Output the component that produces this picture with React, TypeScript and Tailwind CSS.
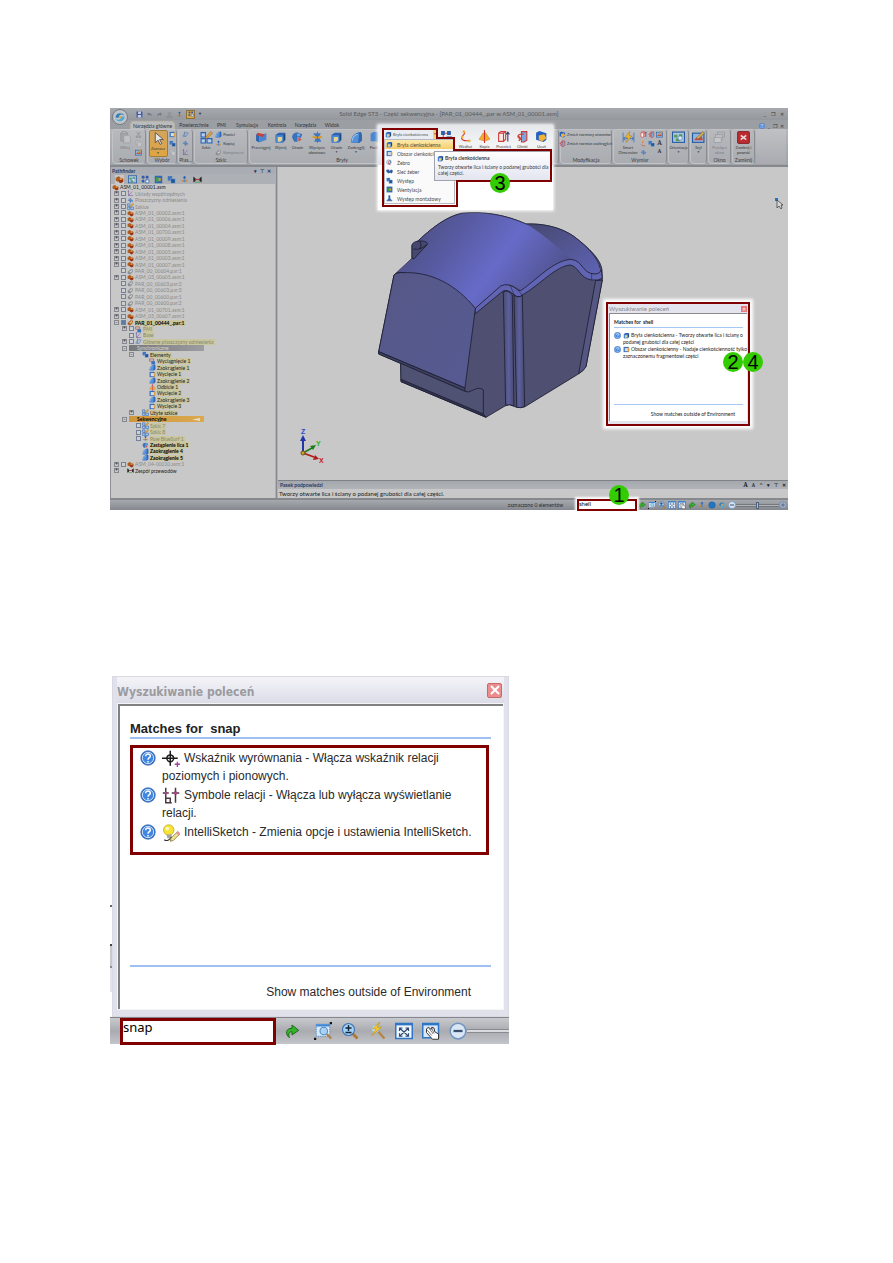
import type { ReactNode } from "react";

type IconName = keyof typeof ICONS;

const ICONS = {
  paste: (
    <>
      <rect x="3" y="3" width="13" height="16" rx="1" fill="#a3a4a8" stroke="#8b8c91" />
      <rect x="6" y="1" width="7" height="4" fill="#b9babd" stroke="#8b8c91" />
      <path d="M9 8h9l3 3v11H9z" fill="#c0c1c4" stroke="#93949a" />
    </>
  ),
  scissors: <path d="M6 3l10 13M18 3L8 16M5 18a3 3 0 1 0 4 0 3 3 0 0 0-4 0m10 0a3 3 0 1 0 4 0 3 3 0 0 0-4 0" fill="none" stroke="#7f8086" strokeWidth="2" />,
  copy: (
    <>
      <path d="M3 2h9l3 3v10H3z" fill="#bcbdc0" stroke="#8f9096" />
      <path d="M9 8h9l3 3v11H9z" fill="#c6c7c9" stroke="#8f9096" />
    </>
  ),
  cursor: <path d="M6 1v19l5-5 4 8 3-2-4-7h7z" fill="#e6e6e6" stroke="#45464c" strokeWidth="1.5" />,
  solid: (
    <>
      <path d="M3 7l6-4h12l-4 5v13H3z" fill="#2c62b0" />
      <path d="M17 8l4-5v13l-4 5z" fill="#1b4684" />
      <path d="M3 8h14v13H3z" fill="#4a86d0" />
      <path d="M7 11h8v6l-4 3H7z" fill="#e6d28a" />
    </>
  ),
  sweep: (
    <>
      <path d="M2 6l6 2v13l-6-3z" fill="#2c62b0" />
      <path d="M8 8l13-4v12L8 21z" fill="#4a86d0" />
      <path d="M4 3l14 3-4 5-11-3z" fill="#c8423c" />
    </>
  ),
  hole: (
    <>
      <path d="M2 12C2 4 9 2 14 3l7 3-3 7-6-2v9H6z" fill="#3973bd" />
      <circle cx="14" cy="7" r="3" fill="#7aa8dd" />
      <path d="M13 12l7 3-6 5z" fill="#cc5650" />
    </>
  ),
  revolve: (
    <>
      <path d="M4 4h14l-3 7 4 9H6l3-9z" fill="#3f7ac4" />
      <path d="M3 10c4 3 13 3 17 0" fill="none" stroke="#d99a2c" strokeWidth="4" />
      <path d="M12 1v21" stroke="#c8423c" strokeWidth="1.5" />
    </>
  ),
  round: (
    <>
      <path d="M2 21C2 10 9 3 20 2l2 4v12l-5 4z" fill="#2f67b3" />
      <path d="M2 21C3 11 9 5 17 4l-2 17z" fill="#5590d8" />
      <path d="M4 18c1-7 5-11 10-12" stroke="#9cc3ee" strokeWidth="2" fill="none" />
    </>
  ),
  draft: (
    <>
      <path d="M3 5l5-3h12v13l-4 4H3z" fill="#4a86d0" />
      <path d="M16 6l4-4v13l-4 4z" fill="#1f4f93" />
      <path d="M14 19h8m-4-4v8" stroke="#39a13a" strokeWidth="3" />
    </>
  ),
  sketch: (
    <>
      <path d="M2 3h8v8H2zM2 14h8v8H2zM13 14h9v8h-9z" fill="#b9cfe9" stroke="#2560b5" strokeWidth="2" />
      <path d="M11 11L20 1l3 3-9 9-4 1z" fill="#e2a73c" stroke="#8a5a1d" />
    </>
  ),
  arrows: (
    <>
      <path d="M12 2l5 5h-3v4h-4V7H7z" fill="#2a66b8" />
      <path d="M3 15l6-4v8zM21 15l-6-4v8z" fill="#cf8930" />
      <circle cx="12" cy="16" r="3" fill="#4d86cc" />
    </>
  ),
  plane: <path d="M3 18L9 6h12l-6 12zM9 2v18" fill="none" stroke="#4a79b8" strokeWidth="2" />,
  pattern: (
    <>
      <path d="M2 2h7v7H2zM13 2h7v7h-7zM2 13h7v7H2z" fill="#2b5fae" />
      <path d="M13 13h8v8h-8z" fill="#fff" stroke="#2b5fae" strokeWidth="2" />
      <path d="M9 6h4M6 9v4" stroke="#c44" strokeWidth="2" />
    </>
  ),
  curve: (
    <>
      <path d="M8 3c8 3-6 8-3 13 3 6 10 3 15 4" fill="none" stroke="#cf3a34" strokeWidth="2" />
      <circle cx="9" cy="3" r="2.5" fill="#f4b13c" />
      <circle cx="6" cy="13" r="2.5" fill="#f4b13c" />
      <circle cx="19" cy="20" r="2.5" fill="#f4b13c" />
    </>
  ),
  mirror: (
    <>
      <path d="M2 17l8-12v15zM22 17L14 5v15z" fill="#f5ae2c" stroke="#c67d12" />
      <path d="M12 0v24" stroke="#d2322c" strokeWidth="2" />
    </>
  ),
  move: (
    <>
      <path d="M3 6l4-3h9v14l-4 4H3zM12 6v15M3 6h9l4-3" fill="#fde8e6" stroke="#cb3d37" strokeWidth="2" />
      <path d="M20 21V4m-3 4l3-4 3 4" fill="none" stroke="#3a3d66" strokeWidth="2" />
    </>
  ),
  rotate: (
    <>
      <path d="M10 3h10v16l-5 3h-5z" fill="#7fa6dc" stroke="#cb3d37" strokeWidth="2" />
      <path d="M14 8C4 6 0 13 8 16m-3-4l4 4-4 4" fill="none" stroke="#cb3d37" strokeWidth="2.5" />
    </>
  ),
  folder: (
    <>
      <path d="M2 5l6-3 13 4v12l-5 4L2 18z" fill="#2461c0" />
      <path d="M7 10l10-2 4 7-8 6-6-3z" fill="#f2b234" />
    </>
  ),
  dimension: (
    <>
      <path d="M2 3v18M22 3v18M2 14h20M6 11l-4 3 4 3M18 11l4 3-4 3" fill="none" stroke="#3c74bb" strokeWidth="1.5" />
      <path d="M14 1L6 12h5l-3 9 10-12h-5z" fill="#eebb36" stroke="#a8781c" />
    </>
  ),
  view: (
    <>
      <rect x="1" y="2" width="22" height="19" fill="#a9c4e0" stroke="#245aa4" strokeWidth="2" />
      <path d="M4 7h6v5H4zM13 6h6v5h-6zM7 14h7v5H7z" fill="#579a52" />
      <circle cx="15" cy="13" r="4" fill="#dbe7f3" stroke="#406da6" />
    </>
  ),
  style: (
    <>
      <rect x="1" y="4" width="21" height="17" fill="#92b4da" stroke="#245aa4" strokeWidth="2" />
      <path d="M4 17c5-9 8 0 14-8l2 8z" fill="#c74a3e" />
      <path d="M8 13L20 1l3 3-12 11z" fill="#deb355" stroke="#70501e" />
    </>
  ),
  windows: (
    <>
      <rect x="8" y="2" width="13" height="9" fill="#b5b6bb" stroke="#8d8e94" />
      <rect x="5" y="7" width="13" height="9" fill="#bebfc3" stroke="#8d8e94" />
      <rect x="2" y="12" width="13" height="9" fill="#c5c6c9" stroke="#8d8e94" />
    </>
  ),
  close: (
    <>
      <rect x="1" y="1" width="22" height="22" rx="2" fill="#bb2b2f" stroke="#7b1b20" strokeWidth="1.5" />
      <path d="M7 8l10 8M17 8L7 16" stroke="#ead9d9" strokeWidth="3" />
    </>
  ),
  asm: (
    <>
      <path d="M2 8l7-5 5 3v8l-6 4-6-3z" fill="#ad5c1d" />
      <path d="M10 11l6-4 6 3v8l-6 4-6-3z" fill="#9b3115" />
      <path d="M10 11l6-4 6 3-6 4z" fill="#dc9a3c" />
    </>
  ),
  part: (
    <>
      <path d="M2 14L12 4l9 2-2 8-8 8-8-2z" fill="#8c8d91" />
      <path d="M8 12l8-5 2 3-7 6z" fill="#d0d1d3" />
    </>
  ),
  partActive: (
    <>
      <path d="M2 14L12 4l9 2-2 8-8 8-8-2z" fill="#ad6226" />
      <path d="M8 12l8-5 2 3-7 6z" fill="#e8c785" />
    </>
  ),
  axes: <path d="M5 2v17h16M5 19L18 5M3 5l2-3 2 3" fill="none" stroke="#71569b" strokeWidth="2" />,
  planes: <path d="M3 12h18M12 3v18M6 7h9l4 9H9z" fill="none" stroke="#4777bd" strokeWidth="2" />,
  cut: (
    <>
      <rect x="2" y="3" width="18" height="18" fill="#346dba" />
      <rect x="6" y="7" width="11" height="11" fill="#d5dbe4" />
      <path d="M17 3l5 5v10l-5 3z" fill="#d2a24a" />
    </>
  ),
  extrude: (
    <>
      <path d="M2 3h14v8H2z" fill="none" stroke="#b8352f" strokeWidth="2" />
      <path d="M8 11h13v11H8z" fill="#3973c0" />
    </>
  ),
  group: (
    <>
      <path d="M2 3h12v12H2z" fill="#3d77c0" />
      <path d="M10 10h12v12H10z" fill="#21569c" stroke="#b9cde6" />
    </>
  ),
  rib: (
    <>
      <circle cx="10" cy="11" r="8" fill="#d9e4f3" stroke="#7c93b6" strokeWidth="2" />
      <path d="M8 5v12l8 4-5-8z" fill="#c5423d" />
      <path d="M13 4l3 9" stroke="#2f63b0" strokeWidth="3" />
    </>
  ),
  net: <path d="M1 8l7-3 4 5 6-4 5 3-3 9-6-3-5 3-6-4z" fill="#2c5ea6" stroke="#1a3d77" />,
  harness: (
    <>
      <path d="M1 4l6 5v6l-6 5zM23 4l-6 5v6l6 5z" fill="#222" />
      <path d="M7 12h10" stroke="#b33" strokeWidth="3" />
      <path d="M5 19h14" stroke="#3a9a3a" strokeWidth="2" />
    </>
  ),
  stand: <path d="M9 2h5v10l7 8H3l6-8zM1 20h21" fill="#3169b4" stroke="#234f8d" />,
  help: (
    <>
      <circle cx="12" cy="12" r="11" fill="#2e6fcd" stroke="#4773b0" />
      <circle cx="12" cy="12" r="8.5" fill="#3f86e0" stroke="#cfe2f8" strokeWidth="1.5" />
      <path d="M8.5 9.5c0-5 7.500-4.500 7 0-.3 2-3.500 2.200-3.500 5M12 16.500v2.200" fill="none" stroke="#fff" strokeWidth="2.200" />
    </>
  ),
  crosshair: (
    <>
      <circle cx="11" cy="11" r="4.500" fill="none" stroke="#1c1c1c" strokeWidth="2" />
      <path d="M0 11h21M11 1v20" stroke="#1c1c1c" strokeWidth="2" />
      <path d="M17 19h7M20.500 15.500v7" stroke="#a2439b" strokeWidth="1.800" />
    </>
  ),
  relations: (
    <>
      <path d="M5 1v20h8M1 8h8M18 1v20M13 8h10M5 15h6v6" fill="none" stroke="#4a3a42" strokeWidth="2" />
      <path d="M3.500 6.500h3v3h-3zM16 6h4v4h-4z" fill="#a04882" />
    </>
  ),
  bulb: (
    <>
      <circle cx="9" cy="8" r="7" fill="#f7e235" stroke="#c0a81d" />
      <circle cx="7" cy="6" r="2.500" fill="#fdf8b8" />
      <path d="M6 14h7l-1 5H7z" fill="#a6a6a6" />
      <path d="M3 21c4 3 8-1 10-4" fill="none" stroke="#333" strokeWidth="1.500" />
      <path d="M21 10l3 3-9 9-4 1 1-4z" fill="#f5e58f" stroke="#77682c" />
      <path d="M21 10l3 3-2 2-3-3z" fill="#e68db4" />
    </>
  ),
  redo: <path d="M8 22C1 16 3 8 12 8V3l10 8-10 7v-5c-4 0-6 3-4 9z" fill="#38b22c" stroke="#1a6d17" strokeWidth="1.500" />,
  zoomArea: (
    <>
      <rect x="3" y="3" width="18" height="16" fill="#dbeafa" stroke="#3d83cf" strokeDasharray="2 1" />
      <path d="M3 3h18v3H3z" fill="#3e88d8" />
      <path d="M21 0h3v3h-3zM0 21h3v3H0z" fill="#111" />
      <circle cx="13" cy="12" r="5" fill="#a9d3f3" stroke="#578bbd" strokeWidth="1.500" />
      <path d="M17 16l6 6" stroke="#b08049" strokeWidth="3" />
    </>
  ),
  zoom: (
    <>
      <path d="M14 14l8 8" stroke="#b07a35" strokeWidth="4" />
      <circle cx="10" cy="10" r="8" fill="#a3d0f5" stroke="#3f73b1" strokeWidth="1.500" />
      <path d="M6 8h8M10 4v8M6 14h8" stroke="#123" strokeWidth="1.800" />
    </>
  ),
  wand: (
    <>
      <path d="M12 11l10 11" stroke="#b58544" strokeWidth="3" />
      <circle cx="10" cy="9" r="5" fill="#c9e4f7" stroke="#93b2cd" />
      <path d="M16 0L6 9h5l-6 9 13-11h-6z" fill="#f5d02f" stroke="#c69415" />
    </>
  ),
  fit: (
    <>
      <rect x="1" y="2" width="22" height="20" fill="#eef5fd" stroke="#2f76c6" strokeWidth="2" />
      <path d="M1 3h22" stroke="#2f76c6" strokeWidth="3" />
      <path d="M6 8l12 11M18 8L6 19M6 12V8h4M14 8h4v4M6 15v4h4M14 19h4v-4" fill="none" stroke="#2c4a70" strokeWidth="1.500" />
    </>
  ),
  pan: (
    <>
      <rect x="1" y="2" width="21" height="19" fill="#dbeafa" stroke="#2f76c6" strokeWidth="2" />
      <path d="M1 3h21" stroke="#2f76c6" strokeWidth="3" />
      <path d="M6 9l3-2 3 3 1-3 3 1 1 5 5 3v7h-8l-8-9z" fill="#fff" stroke="#333" strokeWidth="1.300" />
      <path d="M9 8l6 8M13 8l3 7M7 11l6 7" stroke="#444" />
    </>
  ),
  minus: (
    <>
      <circle cx="12" cy="12" r="10.500" fill="#d8e6f5" stroke="#6d93bf" strokeWidth="2" />
      <path d="M6 12h12" stroke="#384e69" strokeWidth="3" />
    </>
  ),
  plus: (
    <>
      <circle cx="12" cy="12" r="10" fill="#a9b7c8" stroke="#6383aa" strokeWidth="2" />
      <path d="M6 12h12M12 6v12" stroke="#384e69" strokeWidth="2" />
    </>
  ),
  ball: <circle cx="12" cy="12" r="10" fill="#2474c0" stroke="#1c5590" />,
  save: (
    <>
      <path d="M2 2h18l2 3v17H2z" fill="#3c55a5" />
      <path d="M7 2h10v8H7zM6 14h12v8H6z" fill="#c5cde0" />
    </>
  ),
  undo: <path d="M4 10l6-6v4c8-1 11 5 9 11-1-4-4-5-9-5v4z" fill="#737b8a" />,
  swirl: (
    <>
      <path d="M3 13C3 3 17 2 21 9c-6-4-12-2-12 5z" fill="#2c7fb8" />
      <path d="M21 11c1 10-13 13-18 5 6 3 12 1 12-5z" fill="#53a9cf" />
      <path d="M10 10h4v4h-4z" fill="#e1a53c" />
    </>
  ),
  colors: (
    <>
      <path d="M2 2h20v20H2z" fill="#3068b5" />
      <path d="M5 6h7v12H5z" fill="#39a34a" />
      <path d="M12 8h6v8h-6z" fill="#c9a231" />
    </>
  ),
};

function Icon({ name, className }: { name: IconName; className: string }) {
  return (
    <svg viewBox="0 0 24 24" className={`shrink-0 ${className}`} aria-hidden="true">
      {ICONS[name]}
    </svg>
  );
}

/* ---------- Ribbon ---------- */

function RibbonGroup({ label, className, children }: { label: string; className: string; children?: ReactNode }) {
  return (
    <section className={`flex shrink-0 flex-col overflow-hidden rounded-sm border border-[#c0c2c5] border-r-[#8b8d92] bg-linear-to-b from-[#b7b9bd] to-[#a9acb0] ${className}`}>
      <div className="flex min-h-0 flex-1 justify-center gap-px text-[4px]">{children}</div>
      <div className="h-[6px] text-center leading-[6px] whitespace-nowrap text-[#3c3e42]">{label}</div>
    </section>
  );
}

function BigButton({ icon, label, className = "w-[21px]", caret }: { icon: IconName; label: string; className?: string; caret?: boolean }) {
  return (
    <button type="button" className={`flex shrink-0 flex-col items-center pt-px ${className}`}>
      <Icon name={icon} className="size-[13px]" />
      <span className="mt-px block leading-[5px] whitespace-pre">{label}</span>
      {caret && <span className="block text-[3px] leading-[4px]">▼</span>}
    </button>
  );
}

function SmallButton({ icon, label }: { icon: IconName; label?: string }) {
  return (
    <button type="button" aria-label={label ?? icon} className="flex h-[9px] items-center gap-px">
      <Icon name={icon} className="size-[7px]" />
      {label && <span className="whitespace-nowrap">{label}</span>}
    </button>
  );
}

const BODY_TOOLS: { icon: IconName; label: string; caret?: boolean }[] = [
  { icon: "sweep", label: "Przeciągnij" },
  { icon: "solid", label: "Wytnij" },
  { icon: "hole", label: "Otwór" },
  { icon: "revolve", label: "Wycięcie\nobrotowe" },
  { icon: "solid", label: "Otwór", caret: true },
  { icon: "round", label: "Zaokrąglij", caret: true },
  { icon: "draft", label: "Pochyl" },
];

function Ribbon() {
  return (
    <div className="flex h-9 gap-px overflow-hidden bg-linear-to-b from-[#b4b6ba] to-[#9fa2a7] px-[2px] pb-px text-[#36383d]">
      <RibbonGroup label="Schowek" className="w-[34px]">
        <div className="text-[#7c7e83]"><BigButton icon="paste" label="Wklej" className="w-[18px]" /></div>
        <div>
          <SmallButton icon="scissors" />
          <SmallButton icon="copy" />
          <SmallButton icon="style" />
        </div>
      </RibbonGroup>
      <RibbonGroup label="Wybór" className="w-[30px]">
        <div className="rounded-xs border border-[#a57c36] bg-linear-to-b from-[#d1a55d] to-[#e0a541]">
          <BigButton icon="cursor" label="Zaznacz" className="w-[17px]" caret />
        </div>
        <div>
          <SmallButton icon="cut" />
          <SmallButton icon="group" />
          <SmallButton icon="copy" />
        </div>
      </RibbonGroup>
      <RibbonGroup label="Płas..." className="w-[15px]">
        <div>
          <SmallButton icon="plane" />
          <SmallButton icon="planes" />
          <SmallButton icon="axes" />
        </div>
      </RibbonGroup>
      <RibbonGroup label="Szkic" className="w-[54px]">
        <BigButton icon="sketch" label="Szkic" className="w-4" />
        <div>
          <SmallButton icon="round" label="Powiel" />
          <SmallButton icon="arrows" label="Kopiuj" />
          <div className="text-[#7c7e83]"><SmallButton icon="part" label="Komponent" /></div>
        </div>
      </RibbonGroup>
      <RibbonGroup label="Bryły" className="w-[186px]">
        <div className="flex w-full">
          {BODY_TOOLS.map((tool, i) => (
            <BigButton key={i} {...tool} className={i === 0 || i === 3 || i === 5 ? "w-[22px]" : "w-[17px]"} />
          ))}
        </div>
      </RibbonGroup>
      <RibbonGroup label="" className="w-[62px]" />
      <RibbonGroup label="" className="w-[60px]" />
      {/* the open menu covers the left half of this group */}
      <RibbonGroup label="Modyfikacja" className="w-[52px] overflow-visible">
        <div className="mr-px ml-auto flex flex-col">
          <SmallButton icon="folder" label="Zmień rozmiary otworów" />
          <SmallButton icon="rotate" label="Zmień rozmiar zaokrągleń" />
        </div>
      </RibbonGroup>
      <RibbonGroup label="Wymiar" className="w-[54px]">
        <BigButton icon="dimension" label={"Smart\nDimension"} className="w-[22px]" />
        <div className="grid h-[27px] grid-cols-3 gap-x-px">
          <SmallButton icon="move" />
          <SmallButton icon="rotate" />
          <SmallButton icon="style" />
          <SmallButton icon="curve" />
          <SmallButton icon="group" />
          <span className="text-center font-serif text-[7px] leading-2 font-bold">A</span>
          <SmallButton icon="planes" />
          <span />
          <span className="text-center font-serif text-[6px] leading-2 font-bold">A</span>
        </div>
      </RibbonGroup>
      <RibbonGroup label="" className="w-[21px]">
        <BigButton icon="view" label="Orientacja" className="w-[19px]" caret />
      </RibbonGroup>
      <RibbonGroup label="" className="w-[17px]">
        <BigButton icon="style" label="Styl" className="w-[15px]" caret />
      </RibbonGroup>
      <RibbonGroup label="Okno" className="w-[23px]">
        <div className="text-[#7c7e83]"><BigButton icon="windows" label={"Przełącz\nokno"} /></div>
      </RibbonGroup>
      <RibbonGroup label="Zamknij" className="w-[23px]">
        <BigButton icon="close" label={"Zamknij i\npowróć"} />
      </RibbonGroup>
      <div className="flex-1 bg-linear-to-b from-[#bfc1c5] to-[#a9abb0]" />
    </div>
  );
}

const TABS = [
  { label: "Narzędzia główne", width: "w-[45px]" },
  { label: "Powierzchnie", width: "w-[38px]" },
  { label: "PMI", width: "w-[17px]" },
  { label: "Symulacja", width: "w-[34px]" },
  { label: "Kontrola", width: "w-[26px]" },
  { label: "Narzędzia", width: "w-[31px]" },
  { label: "Widok", width: "w-[22px]" },
];

function TitleBar() {
  return (
    <header className="relative">
      <div className="flex h-3 items-center bg-linear-to-b from-[#a6a9ad] to-[#94979c] pr-1 pl-[26px]">
        <div className="flex items-center gap-[3px]">
          <Icon name="save" className="size-[7px]" />
          <Icon name="undo" className="size-[7px]" />
          <Icon name="undo" className="size-[7px] -scale-x-100" />
          <Icon name="scissors" className="size-[7px]" />
          <Icon name="arrows" className="size-[7px]" />
          <span className="flex size-[9px] items-center justify-center border border-[#8f7136] bg-[#d5a751]">
            <Icon name="pattern" className="size-[6px]" />
          </span>
          <span className="text-[4px] text-[#333]">▼</span>
        </div>
        <h1 className="flex-1 pr-[68px] text-center text-[6px] whitespace-nowrap text-[#585b60]">Solid Edge ST3 - Część sekwencyjna - [PAR_01_00444_.par w ASM_01_00001.asm]</h1>
        <div className="flex gap-[5px] text-[5px] text-[#333]">
          <button type="button">_</button>
          <button type="button">❐</button>
          <button type="button">✕</button>
        </div>
      </div>
      <nav className="flex h-[9px] items-end bg-[#9b9ea3] pl-5 text-[#333539]">
        {TABS.map((tab, i) => (
          <button
            key={tab.label}
            type="button"
            className={`h-2 text-center whitespace-nowrap ${tab.width} ${i === 0 ? "rounded-t-sm border border-b-0 border-[#b9b4a6] bg-[#b9bbbf]" : ""}`}
          >
            {tab.label}
          </button>
        ))}
        <div className="mr-1 ml-auto flex items-center gap-[3px] text-[5px]">
          <Icon name="help" className="size-[6px]" />
          <span>_</span>
          <span>❐</span>
          <span>✕</span>
        </div>
      </nav>
      <button type="button" aria-label="Menu" className="absolute top-px left-[2px] flex size-4 items-center justify-center rounded-full border border-[#777b82] bg-[#bfc4ca]">
        <Icon name="swirl" className="size-3" />
      </button>
    </header>
  );
}

/* ---------- PathFinder ---------- */

type TreeRow = {
  label: string;
  level?: 0 | 1 | 2 | 3;
  icon?: IconName;
  open?: boolean;
  closed?: boolean;
  check?: boolean;
  tone?: "grey" | "mark" | "dimMark" | "boldMark" | "sync" | "seq" | "plain";
};

const asm = (label: string): TreeRow => ({ label, icon: "asm", closed: true, check: true });
const par = (label: string): TreeRow => ({ label, icon: "part", check: true });
const feature = (label: string, icon: IconName): TreeRow => ({ label, icon, level: 3, tone: "mark" });

const TREE: TreeRow[] = [
  { label: "Układy współrzędnych", icon: "axes", closed: true, check: true },
  { label: "Płaszczyzny odniesienia", icon: "planes", closed: true, check: true },
  { label: "Szkice", icon: "sketch", closed: true, check: true },
  asm("ASM_01_00002.asm:1"),
  asm("ASM_01_00006.asm:1"),
  asm("ASM_01_00004.asm:1"),
  asm("ASM_01_00700.asm:1"),
  asm("ASM_01_00009.asm:1"),
  asm("ASM_01_00008.asm:1"),
  asm("ASM_01_00005.asm:1"),
  asm("ASM_01_00003.asm:1"),
  asm("ASM_01_00007.asm:1"),
  par("PAR_00_00604.par:1"),
  asm("ASM_03_00605.asm:1"),
  par("PAR_00_00603.par:2"),
  par("PAR_00_00603.par:3"),
  par("PAR_00_00600.par:1"),
  par("PAR_00_00600.par:2"),
  asm("ASM_01_00701.asm:1"),
  asm("ASM_03_00607.asm:1"),
  { label: "PAR_01_00444_.par:1", icon: "partActive", open: true, check: true, tone: "boldMark" },
  { label: "PMI", icon: "extrude", level: 1, closed: true, check: true, tone: "dimMark" },
  { label: "Base", icon: "axes", level: 1, check: true, tone: "dimMark" },
  { label: "Główne płaszczyzny odniesienia", icon: "plane", level: 1, closed: true, check: true, tone: "dimMark" },
  { label: "Synchroniczne", level: 1, open: true, tone: "sync" },
  { label: "Elementy", icon: "group", level: 2, open: true, tone: "mark" },
  feature("Wyciągnięcie 1", "extrude"),
  feature("Zaokrąglenie 1", "round"),
  feature("Wycięcie 1", "cut"),
  feature("Zaokrąglenie 2", "round"),
  feature("Odbicie 1", "mirror"),
  feature("Wycięcie 2", "cut"),
  feature("Zaokrąglenie 3", "round"),
  feature("Wycięcie 3", "cut"),
  { label: "Użyte szkice", icon: "sketch", level: 2, closed: true, tone: "mark" },
  { label: "Sekwencyjne", level: 1, open: true, tone: "seq" },
  { label: "Szkic 7", icon: "sketch", level: 2, check: true, tone: "dimMark" },
  { label: "Szkic 8", icon: "sketch", level: 2, check: true, tone: "dimMark" },
  { label: "Pow BlueSurf 1", icon: "arrows", level: 2, check: true, tone: "dimMark" },
  { label: "Zastąpienie lica 1", icon: "hole", level: 2, tone: "boldMark" },
  { label: "Zaokrąglenie 4", icon: "round", level: 2, tone: "boldMark" },
  { label: "Zaokrąglenie 5", icon: "round", level: 2, tone: "boldMark" },
  asm("ASM_04-00010.asm:1"),
  { label: "Zespół przewodów", icon: "harness", closed: true, tone: "plain" },
];

const INDENT = ["pl-[2px]", "pl-[10px]", "pl-[17px]", "pl-6"];

const TONES = {
  grey: "text-[#8b8b88]",
  plain: "text-[#222]",
  mark: "bg-[#c9c6a0] text-[#222] pr-px",
  dimMark: "bg-[#c9c6a0] text-[#898868] pr-px",
  boldMark: "bg-[#c9c6a0] text-black font-bold pr-px",
  sync: "w-[75px] bg-linear-to-r from-[#77787b] to-[#9c9da0] pl-2 text-[#d5d5d5]",
  seq: "flex w-[75px] items-center justify-between bg-linear-to-r from-[#cf973d] to-[#dba950] pr-1 pl-2 text-black font-bold",
};

function TreeItem({ row }: { row: TreeRow }) {
  const tone = row.tone ?? "grey";
  return (
    <li className={`flex min-h-0 items-center ${INDENT[row.level ?? 0]}`}>
      <span className="flex w-[7px] justify-center">
        {(row.open || row.closed) && (
          <button type="button" aria-label={row.label} className="flex size-[5px] items-center justify-center border border-[#85888d] text-[5px] leading-[3px] text-[#222]">
            {row.open ? "-" : "+"}
          </button>
        )}
      </span>
      {tone !== "sync" && tone !== "seq" && (
        <>
          <span className="flex w-[7px] justify-center">
            {row.check && (
              <input
                type="checkbox"
                aria-label={row.label}
                defaultChecked={row.open}
                className="size-[5px] appearance-none border border-[#73829a] bg-[#cfcfcf] checked:bg-[#5a7ba6]"
              />
            )}
          </span>
          <span className="flex w-[7px] justify-center">{row.icon && <Icon name={row.icon} className="size-[7px]" />}</span>
        </>
      )}
      <span className={`ml-px leading-[6px] whitespace-nowrap ${TONES[tone]}`}>
        {row.label}
        {tone === "seq" && (
          <svg viewBox="0 0 8 3" className="h-[3px] w-2" aria-hidden="true">
            <path d="M0 1.500L8 0v3z" fill="#e8dcc4" />
          </svg>
        )}
      </span>
    </li>
  );
}

function PathFinder() {
  const tools: IconName[] = ["asm", "view", "pattern", "colors", "group", "arrows", "harness"];
  return (
    <aside className="flex w-[165px] shrink-0 flex-col border-l border-[#8d9095] bg-[#c8c8c8]">
      <div className="flex h-[7px] items-center justify-between bg-[#a9adb3] pr-1 pl-px font-bold text-[#1f3966]">
        Pathfinder
        <span className="flex gap-[3px] text-[5px]">
          <span>▾</span>
          <span>⊤</span>
          <span>✕</span>
        </span>
      </div>
      <div className="flex h-[10px] items-center gap-[4px] bg-[#adb0b5] pl-1">
        {tools.map((tool) => (
          <button key={tool} type="button" aria-label={tool} className="first:bg-[#c8c8c8]">
            <Icon name={tool} className="size-[9px]" />
          </button>
        ))}
      </div>
      <ul className="grid h-[290px] auto-rows-fr">
        <li className="flex items-center gap-px pl-px text-[#222]">
          <Icon name="asm" className="size-[7px]" />
          ASM_01_00001.asm
        </li>
        {TREE.map((row) => (
          <TreeItem key={row.label} row={row} />
        ))}
      </ul>
    </aside>
  );
}

/* ---------- Model view ---------- */

function ModelView() {
  return (
    <svg viewBox="0 0 510 313" className="block h-[313px] w-full bg-[#c8c8c8]" preserveAspectRatio="xMinYMin meet" role="img" aria-label="PAR_01_00444">
      <defs>
        <linearGradient id="top" x1="0" y1="0.2" x2="1" y2="0.6">
          <stop offset="0" stopColor="#4c4e7c" />
          <stop offset="0.3" stopColor="#575aa0" />
          <stop offset="0.6" stopColor="#676bc8" />
          <stop offset="1" stopColor="#4d4f85" />
        </linearGradient>
        <linearGradient id="back" x1="0" y1="0" x2="1" y2="1">
          <stop offset="0" stopColor="#46486f" />
          <stop offset="1" stopColor="#5f63b4" />
        </linearGradient>
        <linearGradient id="front" x1="0" y1="0" x2="1" y2="1">
          <stop offset="0" stopColor="#555886" />
          <stop offset="1" stopColor="#575a92" />
        </linearGradient>
        <linearGradient id="tube" x1="0" y1="0" x2="1" y2="0">
          <stop offset="0" stopColor="#4a4b6c" />
          <stop offset="0.5" stopColor="#5c5f9e" />
          <stop offset="1" stopColor="#48496c" />
        </linearGradient>
      </defs>
      <g transform="translate(12 33) scale(0.3333)" stroke="#1d1e33" strokeWidth="2.500" strokeLinejoin="round">
        <path d="M320 218L366 175V135L385 122C430 80 470 50 515 40C580 33 650 45 708 72C760 70 812 82 850 108C900 145 933 180 936 210L937 240L888 500Q880 514 862 524L705 620Q692 625 680 622L658 614L645 618L588 652L333 545L332 490L266 462V455L312 225Z" fill="#4f5071" />
        {/* crown */}
        <path d="M320 218L366 175L400 138L385 122C430 80 470 50 515 40C580 33 650 45 708 72C760 100 810 150 850 178C790 180 745 240 692 272Q680 258 660 254Q640 252 632 258L556 325C490 250 420 216 345 218Z" fill="url(#top)" stroke="none" />
        <path d="M708 72C760 70 812 82 850 108C900 145 926 180 930 205Q932 222 915 222C880 222 868 184 845 178C810 150 760 95 708 72Z" fill="url(#back)" stroke="none" />
        <path d="M385 122C430 80 470 50 515 40C580 33 650 45 708 72C760 70 812 82 850 108C900 145 926 180 930 205M320 218Q330 216 345 218" fill="none" strokeWidth="2" />
        {/* fillet along the upper edge */}
        <path d="M556 325L632 258Q655 246 684 270L692 272C740 240 790 180 845 178C880 184 878 222 915 222Q930 222 934 208L937 235Q925 243 905 240C870 236 865 198 840 195C795 200 750 255 697 285Q685 296 672 284Q652 266 638 274L555 342Z" fill="#6064b2" />
        <path d="M366 175V135Q370 122 395 123Q415 124 412 134Q400 145 372 177Z" fill="#46486f" />
        <path d="M370 147Q390 152 410 134M390 123Q396 135 390 147" fill="none" />
        {/* front face and the step under it */}
        <path d="M312 225Q320 216 345 218C420 216 495 250 556 325L554 342L525 564L266 455Z" fill="url(#front)" />
        <path d="M266 455L525 564V574L266 462Z" fill="#3f4163" />
        <path d="M332 490L525 574Q535 580 550 570Q570 560 580 570V645L333 540Z" fill="#505273" />
        <path d="M333 538L580 642L588 652L333 545Z" fill="#343652" />
        {/* vertical rib */}
        <path d="M640 276L647 616L658 614L672 617L667 285Q652 268 640 276Z" fill="url(#tube)" />
        <path d="M672 285L680 622Q692 625 704 620L697 286Q685 296 672 285Z" fill="url(#tube)" />
        <path d="M917 241L866 521Q882 512 888 500L937 240Q925 243 917 241Z" fill="#555782" />
        <path d="M660 254L672 284M684 270L697 286M905 222V240" fill="none" strokeWidth="1.500" />
      </g>
      {/* triad */}
      <g strokeWidth="1.500" fontSize="7" fontWeight="700" fontFamily="Liberation Sans, sans-serif">
        <path d="M25 286V273" stroke="#2137a8" strokeWidth="2" />
        <path d="M25 268l3 6h-6z" fill="#2137a8" />
        <path d="M25 286l9-5" stroke="#1c7c1c" />
        <path d="M38 278l-3 5-3-4z" fill="#1c7c1c" />
        <path d="M25 286l11 4" stroke="#b01818" />
        <path d="M41 292l-6 1 2-5z" fill="#b01818" />
        <circle cx="25" cy="286" r="2" fill="#d2a02c" stroke="#6c5218" strokeWidth="1" />
        <text x="23" y="267" fill="#2c45d0">Z</text>
        <text x="38" y="279" fill="#25b51b">Y</text>
        <text x="41" y="296" fill="#c42020">X</text>
      </g>
      <g transform="translate(497 31)">
        <path d="M0 0h3v3H0z" fill="#2873bd" />
        <path d="M2 2v8l2-2 2 3 1-1-1-3h2z" fill="#d8d8d8" stroke="#333" strokeWidth="0.700" />
      </g>
    </svg>
  );
}

function Marker({ n, className }: { n: number; className: string }) {
  return (
    <span className={`absolute flex size-5 items-center justify-center rounded-full bg-[#33cc00] font-['Liberation_Sans',Arial,sans-serif] text-[20px] leading-5 text-black ${className}`}>
      {n}
    </span>
  );
}

/* ---------- Thin wall menu ---------- */

const MENU: { icon: IconName; label: string }[] = [
  { icon: "solid", label: "Bryła cienkościenna" },
  { icon: "cut", label: "Obszar cienkościenny" },
  { icon: "rib", label: "Żebro" },
  { icon: "net", label: "Sieć żeber" },
  { icon: "group", label: "Występ" },
  { icon: "colors", label: "Wentylacja" },
  { icon: "stand", label: "Występ montażowy" },
];

const BRIGHT_TOOLS: { icon: IconName; label: string }[] = [
  { icon: "pattern", label: "Wzór" },
  { icon: "curve", label: "Wzdłuż" },
  { icon: "mirror", label: "Kopia" },
  { icon: "move", label: "Przenieś" },
  { icon: "rotate", label: "Obróć" },
  { icon: "folder", label: "Usuń" },
];

function ThinWallMenu() {
  return (
    <div className="absolute top-[17px] left-[268px] h-[85px] w-[175px] bg-white text-[#4a4a4a] shadow-[0_0_3px_1px_#ffffff]">
      <div className="flex h-10 items-start bg-linear-to-b from-[#e6e7ea] via-[#f3f4f6] to-[#dfe1e5] pt-1 pl-[59px] text-[4px]">
        {BRIGHT_TOOLS.map((tool) => (
          <BigButton key={tool.icon} {...tool} className="w-[19px]" />
        ))}
      </div>
      <div className="absolute top-[5px] left-[6px]">
        <button type="button" className="flex h-[9px] w-[53px] items-center gap-px bg-[#e9edf3] pl-px text-[4px]">
          <Icon name="solid" className="size-[7px]" />
          <span className="flex-1 text-left whitespace-nowrap">Bryła cienkościenna</span>
          <span className="h-full w-1 bg-[#f6cf79] text-[3px] leading-[9px]">▼</span>
        </button>
        <ul className="w-[71px] border border-[#b6b9bf] bg-[#fafafa]">
          {MENU.map((item, i) => (
            <li key={item.label} className={i === 0 ? "bg-linear-to-b from-[#fdeaae] to-[#f8cd66]" : ""}>
              <button type="button" className="flex h-[9px] w-full items-center gap-[4px] pl-px whitespace-nowrap">
                <Icon name={item.icon} className="size-[7px]" />
                {item.label}
              </button>
            </li>
          ))}
        </ul>
      </div>
      <div role="tooltip" className="absolute top-[26px] left-[56px] h-[30px] w-[117px] border border-[#a0a3ab] bg-linear-to-b from-white to-[#e3e5f0] pt-[2px] pl-[2px] text-[#3b3b3b]">
        <p className="flex items-center gap-px leading-2 font-bold">
          <Icon name="solid" className="size-[7px]" />
          Bryła cienkościenna
        </p>
        <p className="mt-[2px] pl-px leading-[6px] whitespace-nowrap">
          Tworzy otwarte lica i ściany o podanej grubości dla
          <br />
          całej części.
        </p>
      </div>
      <svg viewBox="0 0 175 85" className="pointer-events-none absolute inset-0" aria-hidden="true">
        <path d="M5 4H59V13H76V25H173V56H79V81H5Z" fill="none" stroke="#800000" strokeWidth="2" />
      </svg>
      <Marker n={3} className="top-12 left-[112px]" />
    </div>
  );
}

function ShellMatches() {
  return (
    <section className="absolute top-[194px] right-[38px] h-[124px] w-[144px] border-2 border-[#800000] bg-[#e4e4ee] p-px pt-0 text-[#222] shadow-[0_0_3px_3px_#ffffff]">
      <div className="flex h-[9px] items-center justify-between text-[6px] text-[#858585]">
        Wyszukiwanie poleceń
        <button type="button" aria-label="Zamknij" className="size-[6px] bg-[#e87878] text-[5px] leading-[6px] text-white">✕</button>
      </div>
      <div className="flex h-[108px] flex-col border-t border-l border-[#8a8a8a] bg-white px-[4px] pt-1 pb-[3px]">
        <h2 className="border-b border-[#a6c8f4] pb-px leading-2 font-bold whitespace-pre">{"Matches for  shell"}</h2>
        <ul className="pt-1">
          <li className="flex gap-[2px]">
            <Icon name="help" className="size-[7px]" />
            <p className="leading-[7px] whitespace-nowrap">
              <Icon name="solid" className="-my-1 mr-px inline size-[7px]" />
              Bryła cienkościenna - Tworzy otwarte lica i ściany o
              <br />
              podanej grubości dla całej części
            </p>
          </li>
          <li className="flex gap-[2px]">
            <Icon name="help" className="size-[7px]" />
            <p className="leading-[7px] whitespace-nowrap">
              <Icon name="cut" className="-my-1 mr-px inline size-[7px]" />
              Obszar cienkościenny - Nadaje cienkościenność tylko
              <br />
              zaznaczonemu fragmentowi części
            </p>
          </li>
        </ul>
        <div className="mt-auto border-t border-[#a6c8f4] pt-[5px] pr-2 text-right leading-2">
          <a href="#outside">Show matches outside of Environment</a>
        </div>
      </div>
      <Marker n={2} className="top-12 left-[115px]" />
      <Marker n={4} className="top-12 left-[135px]" />
    </section>
  );
}

function StatusBar() {
  const tools: IconName[] = ["redo", "zoomArea", "zoom", "fit", "pan", "redo", "arrows", "ball", "swirl", "minus"];
  return (
    <footer className="relative flex h-3 items-center border-t-2 border-[#85888d] bg-linear-to-b from-[#a6a9ae] to-[#85888e]">
      <span className="ml-auto w-[67px] text-center whitespace-nowrap text-[#2d2f33]">zaznaczono 0 elementów</span>
      <input
        aria-label="Wyszukiwanie poleceń"
        defaultValue="shell"
        className="relative ml-[8px] h-3 w-[60px] border-2 border-[#800000] bg-white pb-[3px] text-[6px] leading-[6px] text-black shadow-[0_0_2px_2px_#ffffff]"
      />
      <div className="ml-px flex items-center gap-[2px]">
        {tools.map((tool, i) => (
          <button key={i} type="button" aria-label={tool} className="block">
            <Icon name={tool} className="size-2" />
          </button>
        ))}
      </div>
      <div className="flex h-[3px] w-[43px] items-center border-y border-[#74777c] bg-[#b0b3b8]">
        <span className="mx-auto h-[7px] w-[3px] shrink-0 border border-[#50637d] bg-[#b4c0cf]" />
      </div>
      <Icon name="plus" className="mr-px size-2" />
      <Marker n={1} className="right-[159px] bottom-[5px]" />
    </footer>
  );
}

function SolidEdge() {
  return (
    <div className="relative bg-[#c8c8c8] font-['Liberation_Sans_Narrow',Lato,sans-serif] text-[5px] leading-[6px]">
      <TitleBar />
      <Ribbon />
      <div className="h-[2px] bg-[#85888c]" />
      <div className="flex h-[331px]">
        <PathFinder />
        <div className="w-[3px] shrink-0 border-x border-[#aeb1b5] bg-[#85888d]" />
        <main className="flex min-w-0 flex-1 flex-col">
          <ModelView />
          <div className="flex h-[9px] items-center justify-between border-t border-[#7e8186] bg-linear-to-b from-[#a4a8ae] to-[#b0b4b9] px-[2px] font-bold text-[#1f3966]">
            Pasek podpowiedzi
            <span className="flex items-center gap-1 text-[#23262b]">
              <b className="font-serif text-[7px]">A</b>
              <b className="font-serif">A</b>
              <span>⌃</span>
              <span>▾</span>
              <span>⊤</span>
              <span>✕</span>
            </span>
          </div>
          <p className="pl-px text-[6px] leading-[9px] text-[#1c1c1c]">Tworzy otwarte lica i ściany o podanej grubości dla całej części.</p>
        </main>
      </div>
      <StatusBar />
      <ThinWallMenu />
      <ShellMatches />
    </div>
  );
}

/* ---------- Command finder ---------- */

const MATCHES: { icon: IconName; text: string }[] = [
  { icon: "crosshair", text: "Wskaźnik wyrównania - Włącza wskaźnik relacji poziomych i pionowych." },
  { icon: "relations", text: "Symbole relacji - Włącza lub wyłącza wyświetlanie relacji." },
  { icon: "bulb", text: "IntelliSketch - Zmienia opcje i ustawienia IntelliSketch." },
];

function CommandFinder() {
  const tools: IconName[] = ["zoomArea", "zoom", "wand", "fit", "pan"];
  return (
    <div className="w-full max-w-[399px]">
      <div className="flex">
        {/* edge of the window behind the dialog */}
        <div className="flex w-[2px] shrink-0 flex-col">
          <div className="mt-[229px] h-[2px] bg-[#666]" />
          <div className="mt-[37px] h-[2px] bg-[#444]" />
          <div className="h-5 bg-[#c9c9cd]" />
          <div className="h-[2px] bg-[#8a8a90]" />
          <div className="h-6 bg-[#e3e3ea]" />
        </div>
        <section className="min-w-0 flex-1 border border-[#d9d9e4] bg-[#e1e1ec] px-1 pb-[6px]">
          <div className="flex h-[26px] items-center justify-between bg-linear-to-b from-[#f4f4f8] to-[#dcdce8]">
            <h2 className="pt-1 font-['DejaVu_Sans_Condensed','DejaVu_Sans',sans-serif] text-[12px] font-bold text-[#9b9b9f]">Wyszukiwanie poleceń</h2>
            <button type="button" aria-label="Zamknij" className="mr-[2px] flex size-[15px] items-center justify-center rounded-xs border border-[#c96a6a] bg-[#ec8d8d]">
              <svg viewBox="0 0 12 12" className="size-3" aria-hidden="true">
                <path d="M2 2l8 8M10 2l-8 8" stroke="#fff" strokeWidth="2" />
              </svg>
            </button>
          </div>
          <div className="border border-[#f5f5f8] bg-white">
            <div className="flex h-[305px] flex-col border-t-2 border-l-2 border-[#818181] bg-white pt-[14px] pr-3 pl-[10px]">
              <h3 className="border-b-2 border-[#a0c0f4] text-[13px] leading-[17px] font-bold whitespace-pre text-[#222]">{"Matches for  snap"}</h3>
              <ul className="mt-[6px] mr-[2px] flex flex-col gap-px border-[3px] border-[#800000] pt-px pr-1 pb-[11px] pl-[7px] text-[12px] leading-[18px] text-[#2a2a2a]">
                {MATCHES.map((match) => (
                  <li key={match.text} className="flex gap-[6px]">
                    <Icon name="help" className="mt-px size-4" />
                    <p>
                      <Icon name={match.icon} className="-my-1 mr-1 inline size-[18px] align-middle" />
                      {match.text}
                    </p>
                  </li>
                ))}
              </ul>
              <div className="mt-auto border-t-2 border-[#a0c0f4] pt-4 pr-5 pb-2 text-right text-[12px] leading-[18px] text-[#2a2a2a]">
                <a href="#environment">Show matches outside of Environment</a>
              </div>
            </div>
          </div>
        </section>
      </div>
      <div className="flex h-[27px] items-center border-t border-[#85868c] bg-linear-to-b from-[#c9cace] via-[#a9abb0] to-[#c4c5ca] pl-[10px]">
        <input
          aria-label="Szukaj polecenia"
          defaultValue="snap"
          className="h-[27px] w-[156px] border-[3px] border-[#800000] bg-white pb-2 font-['Noto_Sans',sans-serif] text-[13px] text-black"
        />
        <button type="button" aria-label="redo" className="ml-2">
          <Icon name="redo" className="size-4" />
        </button>
        <div className="ml-[14px] flex gap-[9px]">
          {tools.map((tool) => (
            <button key={tool} type="button" aria-label={tool}>
              <Icon name={tool} className="size-[18px]" />
            </button>
          ))}
          <button type="button" aria-label="minus">
            <Icon name="minus" className="size-[18px]" />
          </button>
        </div>
        <div className="h-1 flex-1 border-y border-[#8a8b90] bg-[#d9dade]" />
      </div>
    </div>
  );
}

export default function App() {
  return (
    <div className="min-h-screen bg-white pt-27 pr-[105px] pb-20 pl-[110px] font-['Liberation_Sans',Arial,sans-serif]">
      <SolidEdge />
      <div className="mt-[166px]">
        <CommandFinder />
      </div>
    </div>
  );
}
